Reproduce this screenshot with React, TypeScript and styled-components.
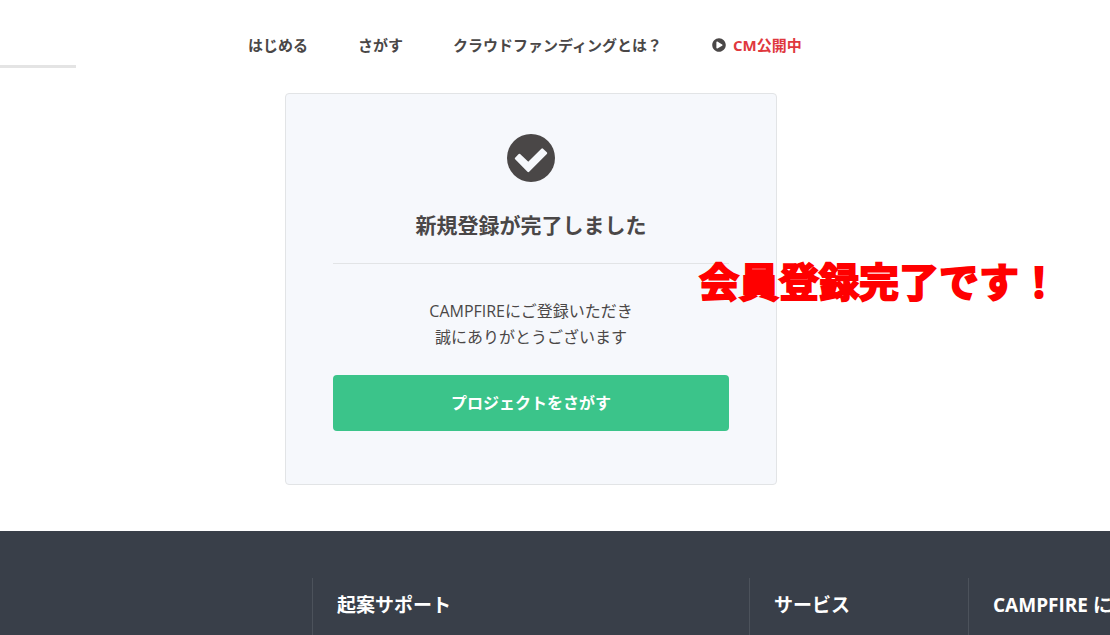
import React from 'react';
import styled, { createGlobalStyle } from 'styled-components';
import { FaPlayCircle } from 'react-icons/fa';

const GlobalStyle = createGlobalStyle`
  * { box-sizing: border-box; }
  html, body, #root { height: 100%; }
  body {
    margin: 0;
    background: #fff;
    color: #4a4747;
    font-family: 'Open Sans', 'Noto Sans CJK JP', sans-serif;
    overflow-x: hidden;
  }
`;

const Page = styled.div`
  display: flex;
  flex-direction: column;
  min-height: 100%;
`;

const Header = styled.header`
  display: flex;
  align-items: flex-start;
  padding-bottom: 25px;
`;

const SearchLine = styled.div`
  width: 76px;
  height: 68px;
  border-bottom: 3px solid #e4e4e4;
`;

const Nav = styled.nav`
  display: flex;
  gap: 50px;
  padding: 33px 0 0 172px;
  white-space: nowrap;
`;

const NavLink = styled.a<{ $accent?: boolean }>`
  display: flex;
  align-items: center;
  gap: 7px;
  color: ${(p) => (p.$accent ? '#e0383e' : '#4a4747')};
  font-size: 15px;
  font-weight: 700;
  line-height: 24px;
  text-decoration: none;

  svg { color: #4a4747; }
`;

const Main = styled.main`
  display: flex;
  justify-content: center;
  padding: 0 48px 46px 0;
`;

const Card = styled.section`
  position: relative;
  width: 100%;
  max-width: 492px;
  padding: 40px 47px 53px;
  border: 1px solid #e2e4e6;
  border-radius: 4px;
  background: #f6f8fc;
  text-align: center;
`;

const DoneIcon = styled.svg`
  display: block;
  width: 48px;
  height: 48px;
  margin: 0 auto;
`;

const Title = styled.h1`
  margin: 27px 0 34px;
  padding-bottom: 22px;
  border-bottom: 1px solid #e2e4e6;
  font-size: 21px;
  font-weight: 600;
  line-height: 32px;
`;

const Message = styled.p`
  margin: 0 0 25px;
  font-size: 16px;
  line-height: 26px;
`;

const SearchButton = styled.button`
  display: block;
  width: 100%;
  padding: 16px;
  border: 0;
  border-radius: 4px;
  background: #3bc48a;
  color: #fff;
  font-family: inherit;
  font-size: 16px;
  font-weight: 700;
  line-height: 24px;
`;

const Callout = styled.strong`
  position: absolute;
  top: 160px;
  left: 413px;
  color: #f00;
  font-size: 40px;
  font-weight: 700;
  line-height: 56px;
  white-space: nowrap;
  -webkit-text-stroke: 2px #f00;
`;

const Footer = styled.footer`
  display: grid;
  grid-template-columns: 312fr 437fr 219fr 142fr;
  flex: 1;
  padding-top: 47px;
  background: #393f49;
  overflow: hidden;
`;

const FooterColumn = styled.div`
  min-width: 0;
  padding: 13px 0 0 24px;
  border-left: 1px solid #4c525b;
`;

const FooterTitle = styled.h2`
  margin: 0;
  color: #fff;
  font-size: 19px;
  font-weight: 700;
  line-height: 28px;
  white-space: nowrap;
`;

const footerTitles = ['起案サポート', 'サービス', 'CAMPFIRE に'];

export default function App() {
  return (
    <Page>
      <GlobalStyle />
      <Header>
        <SearchLine />
        <Nav>
          <NavLink href="#start">はじめる</NavLink>
          <NavLink href="#search">さがす</NavLink>
          <NavLink href="#about">クラウドファンディングとは？</NavLink>
          <NavLink href="#cm" $accent>
            <FaPlayCircle size={14} />
            CM公開中
          </NavLink>
        </Nav>
      </Header>
      <Main>
        <Card>
          <DoneIcon viewBox="0 0 48 48" aria-hidden="true">
            <circle cx="24" cy="24" r="24" fill="#4a4747" />
            <path
              d="M9 24.5 12.3 21 21.3 29.3 35.2 15.6 39 19.2 21.3 36.9Z"
              fill="#f6f8fc"
              stroke="#f6f8fc"
              strokeWidth="2.4"
              strokeLinejoin="round"
            />
          </DoneIcon>
          <Title>新規登録が完了しました</Title>
          <Message>
            CAMPFIREにご登録いただき
            <br />
            誠にありがとうございます
          </Message>
          <SearchButton type="button">プロジェクトをさがす</SearchButton>
          <Callout>会員登録完了です！</Callout>
        </Card>
      </Main>
      <Footer>
        <div />
        {footerTitles.map((title) => (
          <FooterColumn key={title}>
            <FooterTitle>{title}</FooterTitle>
          </FooterColumn>
        ))}
      </Footer>
    </Page>
  );
}
